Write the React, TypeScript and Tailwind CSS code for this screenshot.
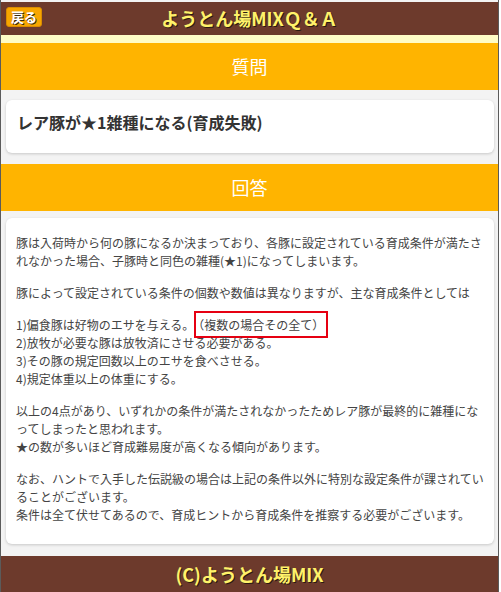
const font = "font-['Meiryo','Noto_Sans_CJK_JP',sans-serif]";

const SectionHead = ({ label }: { label: string }) => (
    <div className="flex h-[47px] items-center justify-center bg-[#ffb400] text-[18px] text-white">
        {label}
    </div>
);

const Card = ({ children, className }: { children: React.ReactNode; className?: string }) => (
    <div className={"rounded-[6px] bg-white shadow-[0_1px_3px_rgba(0,0,0,0.18)] " + (className ?? "")}>
        {children}
    </div>
);

export default function App() {
    return (
        <div className={"flex min-h-[592px] bg-white " + font}>
            <div className="flex w-[499px] flex-col border-x border-[#5b5b5b] bg-[#f3f3f3] pt-[2px]">
                {/* header */}
                <div className="relative flex h-[33px] items-center justify-center bg-[#6d3a2c]">
                    <button className="absolute left-[5px] top-[5px] rounded-[3px] border border-[#d98c00] bg-[#f7a600] px-[4px] text-[13px] font-bold leading-[18px] text-white [text-shadow:1px_1px_0_#3a2a10]">
                        戻る
                    </button>
                    <h1 className="text-[18px] font-bold text-[#fff26a] [text-shadow:1px_1px_0_#2a1a10]">
                        ようとん場MIXＱ＆Ａ
                    </h1>
                </div>
                <div className="h-[8px] bg-[#fffcc6]" />

                <SectionHead label="質問" />
                <div className="pb-[11px] pl-[5px] pr-[4px] pt-[10px]">
                    <Card className="h-[53px] px-[11px] pt-[10px]">
                        <h2 className="text-[16px] font-bold text-[#333]">レア豚が★1雑種になる(育成失敗)</h2>
                    </Card>
                </div>

                <SectionHead label="回答" />
                <div className="pb-[10px] pl-[5px] pr-[4px] pt-[7px]">
                    <Card className="pb-[20px] pl-[10px] pr-[8px] pt-[16px] text-[12px] leading-[18px] text-[#444]">
                        <p>
                            豚は入荷時から何の豚になるか決まっており、各豚に設定されている育成条件が満たされなかった場合、子豚時と同色の雑種(★1)になってしまいます。
                        </p>
                        <p className="mt-[14px]">
                            豚によって設定されている条件の個数や数値は異なりますが、主な育成条件としては
                        </p>
                        <p className="mt-[14px]">
                            1)偏食豚は好物のエサを与える。
                            <span className="border-2 border-[#e60012] px-[2px] py-[3px]">（複数の場合その全て）</span>
                            <br />
                            2)放牧が必要な豚は放牧済にさせる必要がある。
                            <br />
                            3)その豚の規定回数以上のエサを食べさせる。
                            <br />
                            4)規定体重以上の体重にする。
                        </p>
                        <p className="mt-[14px]">
                            以上の4点があり、いずれかの条件が満たされなかったためレア豚が最終的に雑種になってしまったと思われます。
                            <br />
                            ★の数が多いほど育成難易度が高くなる傾向があります。
                        </p>
                        <p className="mt-[14px]">
                            なお、ハントで入手した伝説級の場合は上記の条件以外に特別な設定条件が課されていることがございます。
                            <br />
                            条件は全て伏せてあるので、育成ヒントから育成条件を推察する必要がございます。
                        </p>
                    </Card>
                </div>

                {/* footer */}
                <div className="mt-auto flex h-[36px] items-center justify-center bg-[#6d3a2c] text-[18px] font-bold text-[#fff26a] [text-shadow:1px_1px_0_#2a1a10]">
                    (C)ようとん場MIX
                </div>
            </div>
        </div>
    );
}
